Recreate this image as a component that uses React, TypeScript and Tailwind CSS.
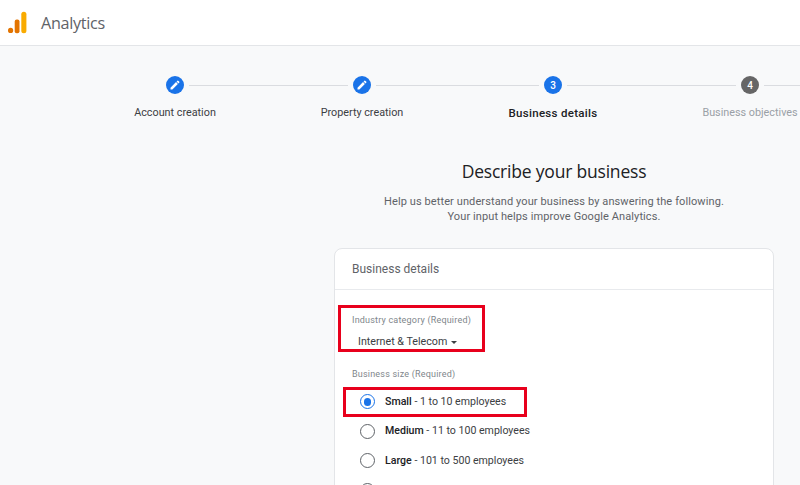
const STEPS = [
  { label: "Account creation", width: "w-[180px]", cls: "text-[#3c4043] text-[10.8px]" },
  { label: "Property creation", width: "w-[194px]", cls: "text-[#3c4043] text-[10.8px]" },
  { label: "Business details", width: "w-[188px]", cls: "text-[#202124] text-[11.5px] font-medium tracking-[0.3px]" },
  { label: "Business objectives", width: "w-[206px]", cls: "text-[#9aa0a6] text-[10.8px]" },
];

const SIZES = [
  { name: "Small", rest: "1 to 10 employees", checked: true },
  { name: "Medium", rest: "11 to 100 employees", checked: false },
  { name: "Large", rest: "101 to 500 employees", checked: false },
  { name: "Very Large", rest: "501+ employees", checked: false },
];

function Logo() {
  return (
    <svg width="20" height="23" viewBox="0 0 20 23" className="shrink-0">
      <circle cx="2.6" cy="19.4" r="2.6" fill="#e37400" />
      <rect x="6.7" y="8.5" width="4.8" height="13.7" rx="2" fill="#e37400" />
      <rect x="13.3" y="0.8" width="5.1" height="21.4" rx="2.5" fill="#f9ab00" />
    </svg>
  );
}

function EditIcon() {
  return (
    <svg width="12" height="12" viewBox="0 0 24 24" fill="#fff">
      <path d="M3 17.25V21h3.75L17.81 9.94l-3.75-3.75L3 17.25zM20.71 7.04a1 1 0 0 0 0-1.41l-2.34-2.34a1 1 0 0 0-1.41 0l-1.83 1.83 3.75 3.75 1.83-1.83z" />
    </svg>
  );
}

function StepDot({ children, color }: { children: React.ReactNode; color: string }) {
  return (
    <span
      className={`w-[18px] h-[18px] rounded-full flex items-center justify-center shrink-0 text-white text-[10px] font-medium ${color}`}
    >
      {children}
    </span>
  );
}

function Line({ width }: { width: string }) {
  return <span className={`h-px bg-[#dadce0] mx-[5px] shrink-0 ${width}`} />;
}

export default function App() {
  return (
    <div className="w-[800px] h-[485px] overflow-hidden bg-[#f8f9fa] font-['Roboto',sans-serif]">
      <header className="h-[46px] bg-white border-b border-[#e3e5e8] flex items-center pl-[8px] gap-[13px]">
        <Logo />
        <span className="mt-[2px] text-[16.2px] text-[#5f6368] font-['Open_Sans',sans-serif] tracking-[-0.3px]">Analytics</span>
      </header>

      <div className="flex items-center pl-[166px] pt-[30px]">
        <StepDot color="bg-[#1a73e8]">
          <EditIcon />
        </StepDot>
        <Line width="w-[159px]" />
        <StepDot color="bg-[#1a73e8]">
          <EditIcon />
        </StepDot>
        <Line width="w-[163px]" />
        <StepDot color="bg-[#1a73e8]">3</StepDot>
        <Line width="w-[169px]" />
        <StepDot color="bg-[#666]">4</StepDot>
        <Line width="w-[40px]" />
      </div>

      <div className="flex pl-[85px] pt-[11px] w-[900px]">
        {STEPS.map((s) => (
          <span key={s.label} className={`text-center leading-[16px] shrink-0 ${s.width} ${s.cls}`}>
            {s.label}
          </span>
        ))}
      </div>

      <div className="ml-[334px] w-[440px] flex flex-col">
        <h1 className="mt-[38px] text-center text-[17.5px] leading-[24px] text-[#202124] font-['Open_Sans',sans-serif] tracking-[-0.2px]">
          Describe your business
        </h1>
        <p className="mt-[11px] text-center text-[11px] leading-[15px] text-[#5f6368] tracking-[0.1px]">
          Help us better understand your business by answering the following.
          <br />
          Your input helps improve Google Analytics.
        </p>

        <section className="mt-[24px] bg-white rounded-t-lg border border-[#e3e5e8] h-[300px]">
          <div className="h-[41px] flex items-center pl-[17px] border-b border-[#e8eaed] text-[12px] text-[#5f6368]">
            Business details
          </div>

          <div className="relative mt-[23px] pl-[17px]">
            <div className="text-[9px] leading-[14px] text-[#80868b] tracking-[0.2px]">Industry category (Required)</div>
            <div className="mt-[7px] pl-[6px] flex items-center gap-[4px] text-[10.7px] leading-[16px] text-[#3c4043]">
              Internet &amp; Telecom
              <span className="w-0 h-0 border-x-[3px] border-x-transparent border-t-[3px] border-t-[#3c4043]" />
            </div>
            <span className="absolute left-[3px] top-[-8px] w-[147px] h-[47px] border-[3px] border-[#e8001c]" />
          </div>

          <div className="mt-[17px] pl-[17px] text-[9px] leading-[14px] text-[#80868b] tracking-[0.2px]">
            Business size (Required)
          </div>
          <div className="mt-[6px] flex flex-col pl-[25px]">
            {SIZES.map((s) => (
              <label key={s.name} className="relative h-[29.5px] flex items-center gap-[10px] shrink-0">
                <span
                  className={`w-[15px] h-[15px] rounded-full border-[1.5px] flex items-center justify-center shrink-0 ${
                    s.checked ? "border-[#1a73e8]" : "border-[#5f6368]"
                  }`}
                >
                  {s.checked && <span className="w-[7.5px] h-[7.5px] rounded-full bg-[#1a73e8]" />}
                </span>
                <span className="text-[10.6px] text-[#3c4043]">
                  <span className="font-medium text-[#202124]">{s.name}</span> - {s.rest}
                </span>
                {s.checked && (
                  <span className="absolute left-[-17px] top-[0px] w-[184px] h-[30px] border-[3px] border-[#e8001c]" />
                )}
              </label>
            ))}
          </div>
        </section>
      </div>
    </div>
  );
}
